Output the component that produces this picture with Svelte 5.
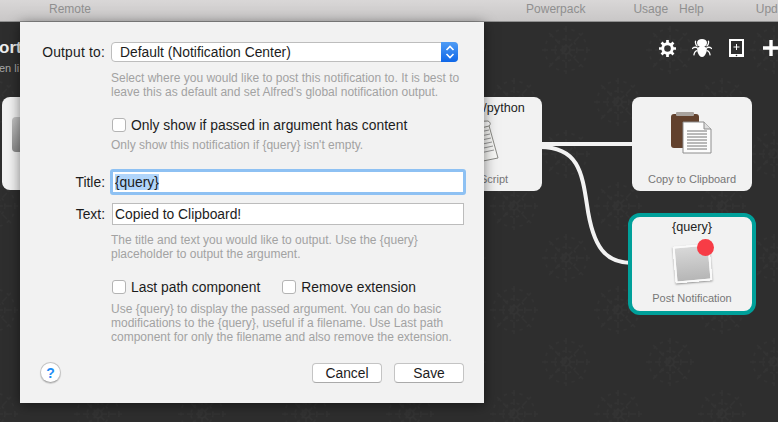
<script>
  let title = "{query}";
  let text = "Copied to Clipboard!";
</script>

<div class="window">
  <div class="toolbar">
    <span class="remote">Remote</span>
    <span class="powerpack">Powerpack</span>
    <span class="usage">Usage</span>
    <span class="help">Help</span>
    <span class="update">Update</span>
  </div>

  <div class="canvas">
    <svg class="pattern" width="778" height="400" aria-hidden="true">
      <defs>
        <g id="rosette" fill="none" stroke="#333333" stroke-width="1.5">
          <circle r="4" />
          <circle r="11" stroke-dasharray="3 3" />
          <path d="M0-24V24M-24 0H24M-17-17L17 17M-17 17L17-17" stroke-dasharray="6 3" />
          <circle r="21" stroke-dasharray="3 5" />
        </g>
        <pattern id="tile" width="104" height="104" patternUnits="userSpaceOnUse" patternTransform="translate(20 2)">
          <use href="#rosette" x="26" y="26" />
          <use href="#rosette" x="78" y="78" />
        </pattern>
      </defs>
      <rect width="778" height="400" fill="url(#tile)" />
    </svg>

    <svg class="wires" width="778" height="400" aria-hidden="true">
      <path d="M540 122H634" />
      <path d="M540 125C578 125 582 150 587 183C593 226 606 241 632 241" />
    </svg>

    <div class="heading">orte</div>
    <div class="subheading">en li</div>

    <div class="node left-node"><div class="left-icon"></div></div>

    <div class="node script-node">
      <span class="node-title">/python</span>
      <svg class="scroll" width="34" height="44" viewBox="0 0 34 44">
        <path d="M2 6L20 2L30 38L10 42Z" fill="#f7f7f5" stroke="#8b8b86" />
        <path d="M1 6Q4 1 20 1Q24 3 21 6L5 10Q1 9 1 6Z" fill="#fff" stroke="#8b8b86" />
        <path d="M7 13L21 10M8 17L22 14M9 21L23 18M10 25L24 22M11 29L25 26M12 33L26 30" stroke="#999" />
      </svg>
      <span class="node-label">Script</span>
    </div>

    <div class="node copy-node">
      <svg class="clipboard" width="46" height="46" viewBox="0 0 46 46">
        <rect x="2" y="2" width="28" height="34" rx="3" fill="#62412d" />
        <rect x="7" y="0" width="18" height="4" rx="1" fill="#a9a39e" />
        <path d="M14 10H35L42 17V41H14Z" fill="#fdfdfd" stroke="#8d8d8d" />
        <path d="M35 10V17H42" fill="#dedede" stroke="#8d8d8d" />
        <path d="M18 19H38M18 22H38M18 25H38M18 28H38M18 31H38M18 34H38M18 37H38" stroke="#777" />
      </svg>
      <span class="node-label">Copy to Clipboard</span>
    </div>

    <div class="node post-node">
      <span class="node-title">{"{query}"}</span>
      <div class="note">
        <div class="note-paper"></div>
        <div class="note-dot"></div>
      </div>
      <span class="node-label">Post Notification</span>
    </div>

    <div class="tools">
      <svg width="17" height="17" viewBox="0 0 20 20">
        <circle cx="10" cy="10" r="5.6" fill="none" stroke="#fff" stroke-width="3.4" />
        <path d="M10 0V5M10 15V20M0 10H5M15 10H20M3 3L6.400 6.400M13.600 13.600L17 17M3 17L6.400 13.600M13.600 6.400L17 3" stroke="#fff" stroke-width="3.200" />
      </svg>
      <svg width="20" height="20" viewBox="0 0 22 20">
        <ellipse cx="11" cy="4.500" rx="5.500" ry="4.500" fill="#fff" />
        <path d="M5.500 10Q11 6 16.500 10L16 14Q14 20 11 20Q8 20 6 14Z" fill="#fff" />
        <path d="M4 2Q3 6 6 8M18 2Q19 6 16 8M0 11Q3 8 6 10M22 11Q19 8 16 10M2 18Q3 13 6 13M20 18Q19 13 16 13" fill="none" stroke="#fff" stroke-width="1.400" />
      </svg>
      <svg class="device" width="15" height="18" viewBox="0 0 15 18">
        <path d="M1 1H14V17H1Z" fill="none" stroke="#fff" stroke-width="2" />
        <path d="M0 15H15V18H0Z" fill="#fff" />
        <circle cx="7.500" cy="16.500" r="0.800" fill="#2e2e2e" />
        <path d="M7.500 5V11M4.500 8H10.500" stroke="#fff" />
      </svg>
      <svg class="plus" width="16" height="16" viewBox="0 0 16 16">
        <path d="M8 0V16M0 8H16" stroke="#fff" stroke-width="3.400" />
      </svg>
    </div>

    <div class="sheet">
      <div class="row output-row">
        <span class="label">Output to:</span>
        <div class="select">
          <span>Default (Notification Center)</span>
          <div class="stepper">
            <svg width="10" height="16" viewBox="0 0 10 16">
              <path d="M1.500 6L5 2.500L8.500 6M1.500 10L5 13.500L8.500 10" fill="none" stroke="#fff" stroke-width="1.600" />
            </svg>
          </div>
        </div>
      </div>
      <p class="hint first-hint">Select where you would like to post this notification to. It is best to<br />leave this as default and set Alfred's global notification output.</p>

      <label class="check only-check"><span class="box"></span>Only show if passed in argument has content</label>
      <p class="hint only-hint">Only show this notification if {"{query}"} isn't empty.</p>

      <div class="row title-row">
        <span class="label">Title:</span>
        <div class="input focused"><span class="selected">{title}</span></div>
      </div>
      <div class="row text-row">
        <span class="label">Text:</span>
        <div class="input">{text}</div>
      </div>
      <p class="hint text-hint">The title and text you would like to output. Use the {"{query}"}<br />placeholder to output the argument.</p>

      <div class="checks">
        <label class="check"><span class="box"></span>Last path component</label>
        <label class="check"><span class="box"></span>Remove extension</label>
      </div>
      <p class="hint last-hint">Use {"{query}"} to display the passed argument. You can do basic<br />modifications to the {"{query}"}, useful if a filename. Use Last path<br />component for only the filename and also remove the extension.</p>

      <div class="footer">
        <button class="help-button">?</button>
        <div class="buttons">
          <button>Cancel</button>
          <button>Save</button>
        </div>
      </div>
    </div>
  </div>
</div>

<style>
  :global(body) {
    margin: 0;
    background: #2e2e2e;
  }
  .window {
    width: 778px;
    height: 422px;
    overflow: hidden;
    font-family: "Liberation Sans", Arial, sans-serif;
    display: flex;
    flex-direction: column;
  }
  .toolbar {
    height: 21px;
    flex: none;
    display: flex;
    align-items: flex-start;
    white-space: nowrap;
    background: linear-gradient(#d9d7d7, #c9c7c7);
    border-bottom: 1px solid #8f8f8f;
    color: #8f8f8f;
    font-size: 12px;
    line-height: 18px;
  }
  .remote { margin-left: 49px; }
  .powerpack { margin-left: 435px; }
  .usage { margin-left: 48px; }
  .help { margin-left: 11px; }
  .update { margin-left: 52px; }

  .canvas {
    position: relative;
    flex: 1;
    background: #2e2e2e;
  }
  .pattern, .wires {
    position: absolute;
    left: 0;
    top: 0;
  }
  .wires path {
    fill: none;
    stroke: #f2f2f2;
    stroke-width: 4px;
  }
  .heading {
    position: absolute;
    left: -1px;
    top: 16px;
    font-size: 17px;
    font-weight: bold;
    color: #eee;
  }
  .subheading {
    position: absolute;
    left: -1px;
    top: 40px;
    font-size: 11px;
    color: #a8a8a8;
  }
  .node {
    position: absolute;
    box-sizing: border-box;
    background: #f2f2f2;
    border-radius: 8px;
    display: flex;
    flex-direction: column;
    align-items: center;
  }
  .left-node {
    left: 2px;
    top: 75px;
    width: 60px;
    height: 93px;
  }
  .left-icon {
    position: absolute;
    left: 10px;
    top: 20px;
    width: 30px;
    height: 35px;
    border-radius: 4px;
    background: linear-gradient(#c4c4c4, #8c8c8c);
  }
  .script-node {
    left: 422px;
    top: 75px;
    width: 120px;
    height: 94px;
  }
  .script-node .node-title {
    margin: 4px 0 0 44px;
  }
  .scroll {
    margin: 4px 0 0 6px;
  }
  .script-node .node-label {
    margin: 8px 0 0 24px;
  }
  .copy-node {
    left: 632px;
    top: 75px;
    width: 120px;
    height: 94px;
    padding-top: 15px;
  }
  .clipboard {
    margin-bottom: 14px;
  }
  .post-node {
    left: 628px;
    top: 191px;
    width: 128px;
    height: 102px;
    border: 4px solid #00a09a;
    border-radius: 12px;
    padding-top: 3px;
  }
  .node-title {
    font-size: 12.600px;
    line-height: 15px;
    color: #222;
  }
  .node-label {
    font-size: 11px;
    line-height: 14px;
    color: #777;
  }
  .note {
    position: relative;
    width: 44px;
    height: 46px;
    margin: 1px 0 9px;
  }
  .note-paper {
    position: absolute;
    left: 4px;
    top: 9px;
    width: 33px;
    height: 33px;
    background: linear-gradient(#d8d8d8, #b6b6b6);
    border: 2px solid #fafafa;
    box-shadow: 0 1px 2px rgba(0, 0, 0, 0.4);
    transform: rotate(-5deg);
  }
  .note-dot {
    position: absolute;
    left: 27px;
    top: 3px;
    width: 17px;
    height: 17px;
    border-radius: 50%;
    background: #f73c46;
  }
  .tools {
    position: absolute;
    left: 659px;
    top: 16px;
    display: flex;
    align-items: center;
    gap: 16px;
  }
  .device {
    margin-left: 1px;
  }
  .plus {
    margin-left: 3px;
  }

  .sheet {
    position: absolute;
    left: 20px;
    top: 0;
    box-sizing: border-box;
    width: 464px;
    height: 381px;
    padding: 20px 20px 0;
    background: #f2f2f2;
    box-shadow: 0 2px 12px rgba(0, 0, 0, 0.5);
    font-size: 13.850px;
    color: #1c1c1c;
  }
  .row {
    display: flex;
    align-items: center;
  }
  .label {
    width: 65px;
    text-align: right;
    flex: none;
    margin-right: 6px;
    white-space: nowrap;
  }
  .output-row .label {
    letter-spacing: 0.2px;
  }
  .select {
    box-sizing: border-box;
    width: 347px;
    height: 20px;
    display: flex;
    align-items: center;
    justify-content: space-between;
    padding-left: 8px;
    background: #fff;
    border: 1px solid #bdbdbd;
    border-radius: 4px;
    line-height: 18px;
  }
  .stepper {
    width: 17px;
    height: 20px;
    margin: -1px;
    border-radius: 0 4px 4px 0;
    background: linear-gradient(#4f9cf5, #0f67e8);
    display: flex;
    align-items: center;
    justify-content: center;
  }
  .hint {
    margin: 0 0 0 71px;
    font-size: 12px;
    line-height: 14px;
    color: #a2a2a2;
    white-space: nowrap;
  }
  .first-hint { margin-top: 9px; }
  .check {
    display: flex;
    align-items: center;
    gap: 5px;
    line-height: 16px;
    white-space: nowrap;
  }
  .box {
    box-sizing: border-box;
    width: 14px;
    height: 14px;
    background: #fff;
    border: 1px solid #b4b4b4;
    border-radius: 3px;
    flex: none;
  }
  .only-check {
    margin: 18px 0 0 72px;
  }
  .only-hint { margin-top: 5px; }
  .title-row { margin-top: 19px; }
  .text-row { margin-top: 10px; }
  .input {
    box-sizing: border-box;
    width: 352px;
    height: 22px;
    margin-left: 1px;
    padding-left: 2px;
    background: #fff;
    border: 1px solid #bcbcbc;
    line-height: 20px;
  }
  .focused {
    outline: 3px solid #8ec1f3;
    outline-offset: -1px;
    border-radius: 1px;
  }
  .selected {
    background: #b0d5fb;
  }
  .text-hint { margin-top: 8px; }
  .checks {
    display: flex;
    gap: 22px;
    margin: 18px 0 0 72px;
  }
  .last-hint { margin-top: 7px; }
  .footer {
    display: flex;
    justify-content: space-between;
    align-items: center;
    margin-top: 18px;
  }
  .buttons {
    display: flex;
    gap: 12px;
  }
  button {
    box-sizing: border-box;
    width: 70px;
    height: 20px;
    padding: 0;
    background: #fff;
    border: 1px solid #c4c4c4;
    border-bottom-color: #aaa;
    border-radius: 4px;
    font: 13.850px "Liberation Sans", Arial, sans-serif;
    color: #1c1c1c;
  }
  .help-button {
    width: 21px;
    height: 21px;
    border-radius: 50%;
    font-size: 14px;
    font-weight: bold;
    color: #1e8df5;
    box-shadow: 0 1px 1px rgba(0, 0, 0, 0.15);
  }
</style>
